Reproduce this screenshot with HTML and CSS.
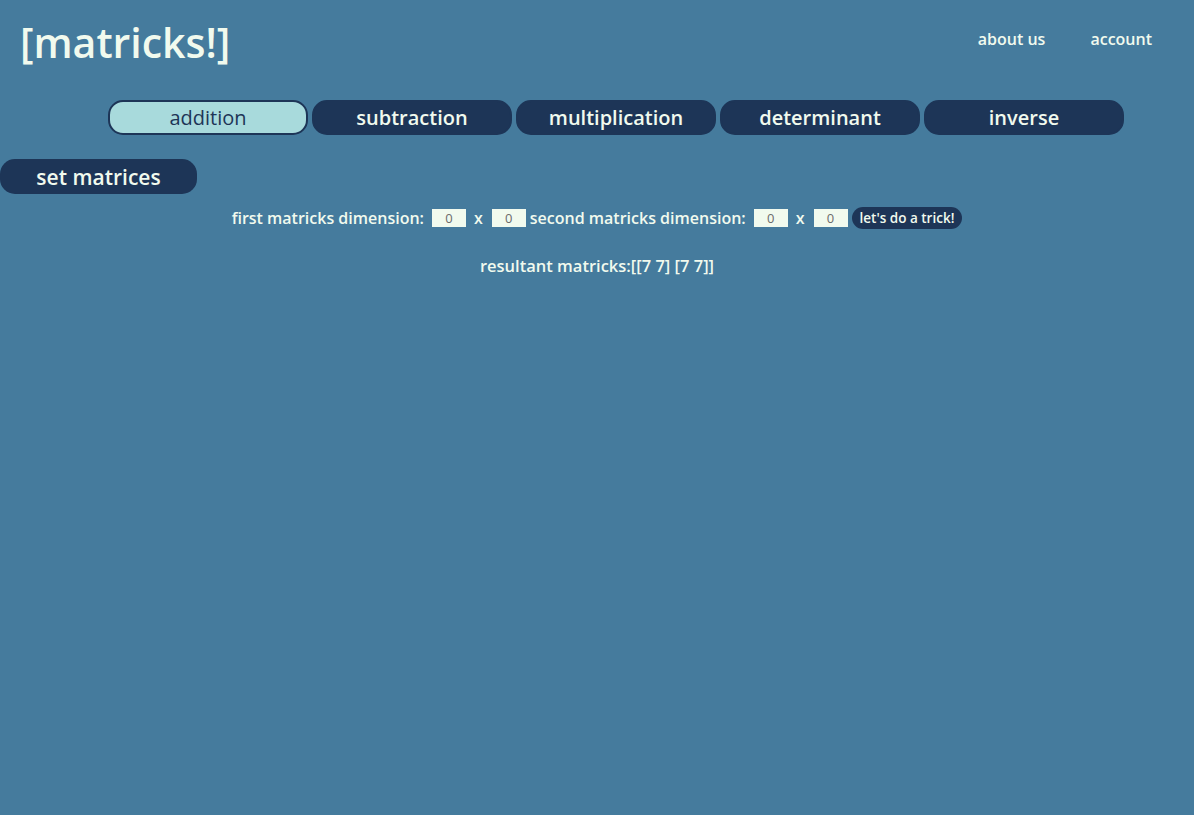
FILE: index.html
```html
<!DOCTYPE html>
<html>
<head>
<meta charset="utf-8">
<title>matricks</title>
<link rel="stylesheet" href="styles.css">
</head>
<body>
<header class="header">
  <div class="logo">[matricks!]</div>
  <nav class="nav">
    <a class="nav-link" href="#">about us</a>
    <a class="nav-link" href="#">account</a>
  </nav>
</header>
<div class="tabs">
  <button class="tab tab-active">addition</button>
  <button class="tab">subtraction</button>
  <button class="tab">multiplication</button>
  <button class="tab">determinant</button>
  <button class="tab">inverse</button>
</div>
<button class="set-btn">set matrices</button>
<div class="dims">
  <span class="label">first matricks dimension:</span>
  <input class="dim-input" type="text" value="0">
  <span class="times">x</span>
  <input class="dim-input" type="text" value="0">
  <span class="label">second matricks dimension:</span>
  <input class="dim-input" type="text" value="0">
  <span class="times">x</span>
  <input class="dim-input" type="text" value="0">
  <button class="trick-btn">let's do a trick!</button>
</div>
<p class="result">resultant matricks:[[7 7] [7 7]]</p>
</body>
</html>
```
FILE: styles.css
```css
* { box-sizing: border-box; }
body {
  margin: 0;
  background: #457b9d;
  color: #f1faee;
  font-family: "Open Sans", "Noto Sans", sans-serif;
  min-height: 815px;
}
.header {
  display: flex;
  justify-content: space-between;
  align-items: center;
  height: 84px;
  padding: 0 42px 0 20px;
}
.logo {
  font-size: 41px;
  font-weight: 600;
  color: #f1faee;
}
.nav {
  display: flex;
  gap: 45px;
  margin-top: -6px;
}
.nav-link {
  color: #f1faee;
  text-decoration: none;
  font-size: 16px;
  font-weight: 600;
}
.tabs {
  display: flex;
  gap: 4px;
  padding-left: 108px;
  margin-top: 16px;
}
.tab {
  width: 200px;
  height: 35px;
  border: 2px solid #1d3557;
  border-radius: 15px;
  background: #1d3557;
  color: #f1faee;
  font-family: inherit;
  font-size: 20px;
  font-weight: 600;
  padding: 0;
}
.tab-active {
  background: #a8dadc;
  color: #1d3557;
  font-weight: 500;
}
.set-btn {
  display: block;
  margin-top: 24px;
  width: 197px;
  height: 35px;
  border: none;
  border-radius: 15px;
  background: #1d3557;
  color: #f1faee;
  font-family: inherit;
  font-size: 21px;
  font-weight: 600;
  padding: 0;
}
.dims {
  display: flex;
  justify-content: center;
  align-items: center;
  margin-top: 13px;
  height: 22px;
  font-size: 16px;
  font-weight: 600;
}
.label { margin-right: 8px; }
.dim-input {
  width: 34px;
  height: 18px;
  border: none;
  background: #f1faee;
  color: #6b6b6b;
  font-family: inherit;
  font-size: 13px;
  text-align: center;
  padding: 0;
  margin-right: 4px;
}
.times { margin: 0 9px 0 4px; }
.trick-btn {
  height: 22px;
  border: none;
  border-radius: 11px;
  background: #1d3557;
  color: #f1faee;
  font-family: inherit;
  font-size: 13.5px;
  font-weight: 600;
  padding: 0 8px;
}
.result {
  margin: 25px 0 0;
  text-align: center;
  font-size: 16.5px;
  font-weight: 600;
}
```
